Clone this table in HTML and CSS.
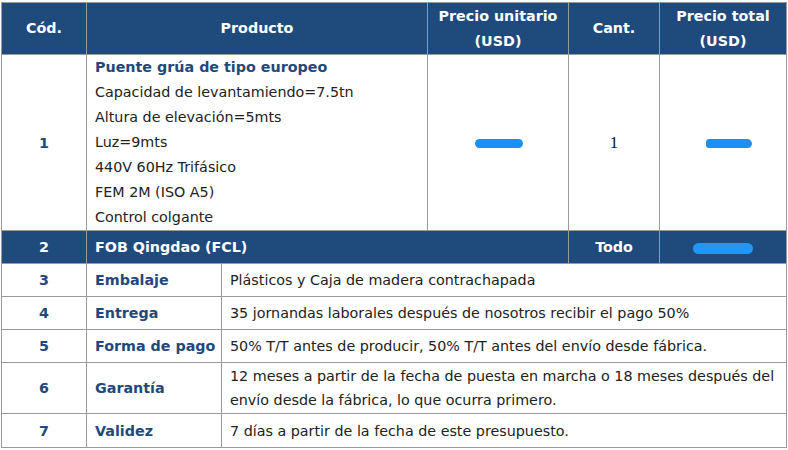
FILE: index.html
```html
<!DOCTYPE html>
<html lang="es">
<head>
<meta charset="utf-8">
<title>Presupuesto</title>
<link rel="stylesheet" href="styles.css">
</head>
<body>
<table class="quote">
  <colgroup>
    <col class="c1"><col class="c2"><col class="c3"><col class="c4"><col class="c5"><col class="c6">
  </colgroup>
  <thead>
    <tr class="head">
      <th>Cód.</th>
      <th colspan="2">Producto</th>
      <th>Precio unitario<br>(USD)</th>
      <th>Cant.</th>
      <th>Precio total<br>(USD)</th>
    </tr>
  </thead>
  <tbody>
    <tr class="prod">
      <td class="num">1</td>
      <td colspan="2" class="desc">
        <div class="title">Puente grúa de tipo europeo</div>
        <div>Capacidad de levantamiendo=7.5tn</div>
        <div>Altura de elevación=5mts</div>
        <div>Luz=9mts</div>
        <div>440V 60Hz Trifásico</div>
        <div>FEM 2M (ISO A5)</div>
        <div>Control colgante</div>
      </td>
      <td class="center"><span class="blob b1"></span></td>
      <td class="center qty">1</td>
      <td class="center"><span class="blob b2"></span></td>
    </tr>
    <tr class="fob">
      <td class="num">2</td>
      <td colspan="3" class="fobtxt">FOB Qingdao (FCL)</td>
      <td class="center">Todo</td>
      <td class="center"><span class="blob b3"></span></td>
    </tr>
    <tr class="term">
      <td class="num">3</td>
      <td class="label">Embalaje</td>
      <td colspan="4" class="text">Plásticos y Caja de madera contrachapada</td>
    </tr>
    <tr class="term">
      <td class="num">4</td>
      <td class="label">Entrega</td>
      <td colspan="4" class="text">35 jornandas laborales después de nosotros recibir el pago 50%</td>
    </tr>
    <tr class="term">
      <td class="num">5</td>
      <td class="label">Forma de pago</td>
      <td colspan="4" class="text">50% T/T antes de producir, 50% T/T antes del envío desde fábrica.</td>
    </tr>
    <tr class="term tall">
      <td class="num">6</td>
      <td class="label">Garantía</td>
      <td colspan="4" class="text">12 meses a partir de la fecha de puesta en marcha o 18 meses después del envío desde la fábrica, lo que ocurra primero.</td>
    </tr>
    <tr class="term last">
      <td class="num">7</td>
      <td class="label">Validez</td>
      <td colspan="4" class="text">7 días a partir de la fecha de este presupuesto.</td>
    </tr>
  </tbody>
</table>
</body>
</html>
```

FILE: styles.css
```css
html, body {
  margin: 0;
  padding: 0;
  background: #ffffff;
}

body {
  font-family: "DejaVu Sans", Verdana, sans-serif;
  font-size: 14.3px;
  color: #222222;
}

.quote {
  border-collapse: collapse;
  table-layout: fixed;
  width: 785px;
  margin: 2px 0 0 1px;
}

.c1 { width: 85px; }
.c2 { width: 135px; }
.c3 { width: 206px; }
.c4 { width: 141px; }
.c5 { width: 91px; }
.c6 { width: 127px; }

.quote th,
.quote td {
  border: 1px solid #9a9a9a;
  padding: 0;
  vertical-align: middle;
}

.head th {
  background: #1f4a7c;
  color: #ffffff;
  font-weight: bold;
  line-height: 25px;
  height: 51px;
  text-align: center;
}

.prod .desc {
  padding: 0 8px;
  line-height: 25px;
}

.title {
  color: #1f497d;
  font-weight: bold;
}

.num {
  text-align: center;
  color: #1f497d;
  font-weight: bold;
}

.center {
  text-align: center;
}

.qty {
  font-family: "Liberation Serif", "Times New Roman", serif;
  font-size: 17px;
  color: #111111;
}

.blob {
  display: inline-block;
  vertical-align: middle;
  background: #1c8ff5;
  border-radius: 6px;
  height: 9px;
}

.b1 { width: 48px; margin-left: 2px; }
.b2 { width: 46px; margin-left: 12px; border-radius: 5px 7px 6px 4px; }
.b3 { width: 60px; height: 11px; background: #2196f3; }

.fob td {
  background: #1f4a7c;
  color: #ffffff;
  font-weight: bold;
  height: 32px;
}

.fob .num {
  color: #ffffff;
}

.fobtxt {
  padding-left: 8px !important;
}

.term td {
  height: 32px;
  line-height: 24px;
}

.term.tall td {
  height: 50px;
}

.term.last td {
  height: 33px;
}

.label {
  color: #1f497d;
  font-weight: bold;
  padding-left: 8px !important;
  white-space: nowrap;
}

.text {
  padding-left: 8px !important;
  padding-right: 4px !important;
}
```
